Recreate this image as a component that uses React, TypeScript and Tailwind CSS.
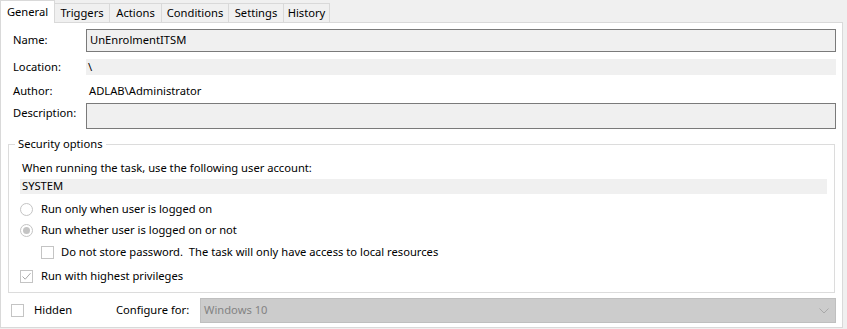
import React from "react";

const Radio = ({ checked }: { checked?: boolean }) => (
  <span className="w-[13px] h-[13px] rounded-full border border-[#c4c4c4] bg-white flex items-center justify-center shrink-0">
    {checked && <span className="w-[7px] h-[7px] rounded-full bg-[#c4c4c4]" />}
  </span>
);

const Check = ({ checked }: { checked?: boolean }) => (
  <span className="w-[13px] h-[13px] border border-[#c4c4c4] bg-white flex items-center justify-center shrink-0">
    {checked && (
      <svg width="11" height="11" viewBox="0 0 11 11">
        <path d="M1.5 5.5 L4.2 8.2 L9.5 2.2" fill="none" stroke="#a8a8a8" strokeWidth="1" />
      </svg>
    )}
  </span>
);

const tabs: { label: string; w: string }[] = [
  { label: "Triggers", w: "w-[56px]" },
  { label: "Actions", w: "w-[53px]" },
  { label: "Conditions", w: "w-[68px]" },
  { label: "Settings", w: "w-[56px]" },
  { label: "History", w: "w-[47px]" },
];

export default function App() {
  return (
    <div
      className="w-[847px] h-[329px] bg-[#f0f0f0] text-[11.2px] text-black overflow-hidden"
      style={{ fontFamily: '"Segoe UI", "Noto Sans", sans-serif' }}
    >
      {/* tabs */}
      <div className="flex items-end h-[22px]">
        <div className="relative z-10 w-[55px] h-[23px] -mb-px bg-white border border-b-0 border-[#d9d9d9] flex items-start justify-center pt-[3px]">
          General
        </div>
        {tabs.map((t) => (
          <div
            key={t.label}
            className={`${t.w} h-[19px] -ml-px first:ml-0 bg-[#f0f0f0] border border-b-0 border-[#d9d9d9] flex items-center justify-center leading-none`}
          >
            {t.label}
          </div>
        ))}
      </div>
      {/* panel */}
      <div className="w-[843px] h-[306px] bg-white border border-[#d9d9d9] pt-[6px] pr-[6px] flex flex-col">
        <div className="flex items-center h-[23px]">
          <span className="w-[85px] pl-[12px]">Name:</span>
          <div className="flex-1 h-[23px] border border-[#7a7a7a] bg-[#f0f0f0] flex items-center pl-[3px]">
            UnEnrolmentITSM
          </div>
        </div>
        <div className="flex items-center h-[16px] mt-[7px]">
          <span className="w-[85px] pl-[12px]">Location:</span>
          <div className="flex-1 h-[16px] bg-[#f0f0f0] flex items-center pl-[2px]">\</div>
        </div>
        <div className="flex items-center h-[16px] mt-[8px]">
          <span className="w-[85px] pl-[12px]">Author:</span>
          <span className="pl-[3px]">ADLAB\Administrator</span>
        </div>
        <div className="flex items-center h-[26px] mt-[4px]">
          <span className="w-[85px] pl-[12px] self-start pt-[2px]">Description:</span>
          <div className="flex-1 h-[26px] border border-[#7a7a7a] bg-[#f0f0f0]" />
        </div>
        <fieldset className="ml-[7px] mr-[1px] mt-[7px] h-[157px] border border-[#dcdcdc] px-[11px] pt-0">
          <legend className="-ml-[5px] px-[3px] leading-[16px]">Security options</legend>
          <div className="h-[16px] flex items-center mt-[8px] pl-[2px]">
            When running the task, use the following user account:
          </div>
          <div className="h-[15px] mt-[3px] bg-[#f0f0f0] flex items-center pl-[2px] mr-[-4px]">SYSTEM</div>
          <div className="flex items-center h-[16px] mt-[7px] gap-[8px]">
            <Radio />
            <span>Run only when user is logged on</span>
          </div>
          <div className="flex items-center h-[16px] mt-[5px] gap-[8px]">
            <Radio checked />
            <span>Run whether user is logged on or not</span>
          </div>
          <div className="flex items-center h-[16px] mt-[6px] gap-[7px] pl-[21px]">
            <Check />
            <span>Do not store password.&nbsp; The task will only have access to local resources</span>
          </div>
          <div className="flex items-center h-[16px] mt-[8px] gap-[8px]">
            <Check checked />
            <span>Run with highest privileges</span>
          </div>
        </fieldset>
        <div className="flex items-center h-[25px] mt-[5px] pl-[10px]">
          <Check />
          <span className="ml-[10px] w-[82px]">Hidden</span>
          <span className="w-[84px]">Configure for:</span>
          <div className="flex-1 h-[25px] bg-[#cccccc] border border-[#bfbfbf] flex items-center pl-[3px] text-[#838383]">
            <span className="flex-1">Windows 10</span>
            <svg width="10" height="6" viewBox="0 0 10 6" className="mr-[6px]">
              <path d="M0.5 0.5 L5 5 L9.5 0.5" fill="none" stroke="#a8a8a8" strokeWidth="1" />
            </svg>
          </div>
        </div>
      </div>
    </div>
  );
}
